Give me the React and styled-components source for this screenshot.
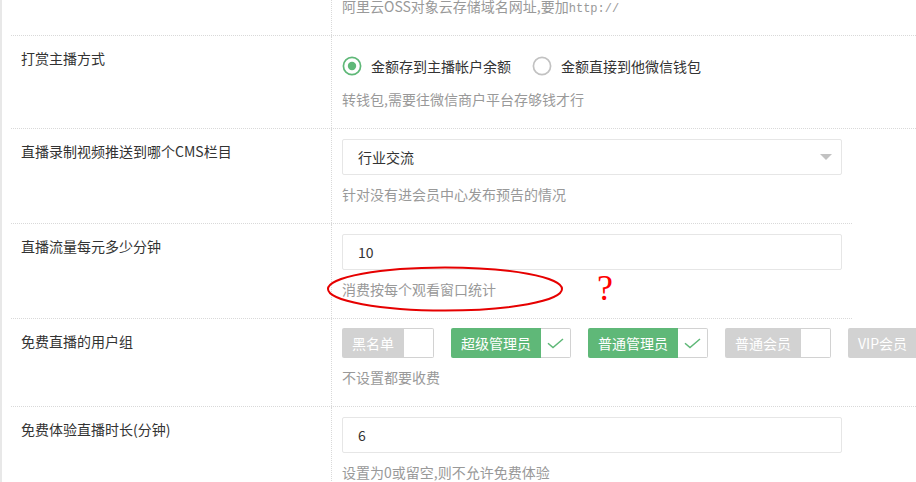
import React from 'react';
import styled, { createGlobalStyle } from 'styled-components';

const Global = createGlobalStyle`
  html, body { margin: 0; padding: 0; background: #fff; overflow: hidden; }
  body {
    font-family: "Noto Sans CJK SC", "Liberation Sans", sans-serif;
    font-size: 14px;
    color: #333;
  }
`;

const Page = styled.div`
  border-left: 2px solid #e8e8e8;
  padding-left: 9px;
  margin-top: -59px;
  min-height: 620px;
`;

const Row = styled.div`
  display: flex;
  width: ${(p) => (p.$narrow ? '841px' : '905px')};
  border-bottom: 1px dotted #d9d9d9;
`;

const LabelCell = styled.div`
  flex: 0 0 321px;
  box-sizing: border-box;
  border-right: 1px dotted #d9d9d9;
  padding: 12px 10px;
  line-height: 20px;
  color: #333;
`;

const FieldCell = styled.div`
  position: relative;
  flex: 1;
  min-width: 0;
  padding: 10px 0 10px 10px;
`;

const TextInput = styled.input`
  display: block;
  width: 500px;
  height: 36px;
  box-sizing: border-box;
  border: 1px solid #e6e6e6;
  border-radius: 2px;
  padding: 0 0 0 15px;
  margin: 0;
  font-family: inherit;
  font-size: 14px;
  color: #333;
  background: #fff;
  outline: none;
`;

const SelectBox = styled.div`
  display: flex;
  align-items: center;
  justify-content: space-between;
  width: 500px;
  height: 36px;
  box-sizing: border-box;
  border: 1px solid #e6e6e6;
  border-radius: 2px;
  padding: 0 9px 0 15px;
  color: #333;
`;

const Caret = styled.span`
  width: 0;
  height: 0;
  border: 6px solid transparent;
  border-top-color: #c2c2c2;
  margin-top: 6px;
`;

const Hint = styled.div`
  padding: 9px 0;
  height: 20px;
  line-height: 20px;
  color: #999;
  white-space: nowrap;
`;

const Mono = styled.span`
  font-family: "Liberation Mono", monospace;
  font-size: 12px;
  line-height: 1;
`;

const RadioGroup = styled.div`
  display: flex;
  align-items: center;
  height: 28px;
  margin-top: 6px;
`;

const RadioItem = styled.div`
  display: flex;
  align-items: center;
  margin-right: 21px;
  color: #333;
  line-height: 28px;
`;

const RadioIcon = styled.svg`
  width: 20px;
  height: 20px;
  margin-right: 9px;
  flex: 0 0 auto;
`;

const ToggleRow = styled.div`
  display: flex;
  flex-wrap: nowrap;
  gap: 17px;
  height: 30px;
  margin-top: -1px;
`;

const Toggle = styled.div`
  display: flex;
  flex: 0 0 auto;
  height: 30px;
`;

const ToggleText = styled.span`
  background: ${(p) => (p.$on ? '#5FB878' : '#d2d2d2')};
  color: #fff;
  padding: 0 10px;
  line-height: 30px;
  border-radius: 2px 0 0 2px;
  white-space: nowrap;
`;

const ToggleBox = styled.span`
  width: 30px;
  box-sizing: border-box;
  border: 1px solid #d2d2d2;
  border-left: none;
  border-radius: 0 2px 2px 0;
  display: flex;
  align-items: center;
  justify-content: center;
  background: #fff;
`;

const Ellipse = styled.svg`
  position: absolute;
  left: -7px;
  top: 41px;
  width: 240px;
  height: 48px;
  pointer-events: none;
`;

const Question = styled.span`
  position: absolute;
  left: 265px;
  top: 46px;
  font-family: "Liberation Serif", serif;
  font-size: 36px;
  line-height: 1;
  color: #f00;
`;

function Radio({ checked, children }) {
  return (
    <RadioItem>
      <RadioIcon viewBox="0 0 20 20">
        <circle
          cx="10"
          cy="10"
          r="8.6"
          fill="none"
          stroke={checked ? '#5FB878' : '#c2c2c2'}
          strokeWidth="1.7"
        />
        {checked && <circle cx="10" cy="10" r="4.2" fill="#5FB878" />}
      </RadioIcon>
      {children}
    </RadioItem>
  );
}

function Check({ on, children }) {
  return (
    <Toggle>
      <ToggleText $on={on}>{children}</ToggleText>
      <ToggleBox>
        {on && (
          <svg width="17" height="11" viewBox="0 0 17 11">
            <path d="M1 5.2 L6 9.6 L16 1" fill="none" stroke="#5FB878" strokeWidth="1.5" />
          </svg>
        )}
      </ToggleBox>
    </Toggle>
  );
}

export default function App() {
  return (
    <>
      <Global />
      <Page>
        <Row>
          <LabelCell />
          <FieldCell>
            <TextInput readOnly defaultValue="" />
            <Hint>
              阿里云OSS对象云存储域名网址,要加<Mono>http://</Mono>
            </Hint>
          </FieldCell>
        </Row>

        <Row>
          <LabelCell>打赏主播方式</LabelCell>
          <FieldCell>
            <RadioGroup>
              <Radio checked>金额存到主播帐户余额</Radio>
              <Radio>金额直接到他微信钱包</Radio>
            </RadioGroup>
            <Hint>转钱包,需要往微信商户平台存够钱才行</Hint>
          </FieldCell>
        </Row>

        <Row $narrow>
          <LabelCell>直播录制视频推送到哪个CMS栏目</LabelCell>
          <FieldCell>
            <SelectBox>
              <span>行业交流</span>
              <Caret />
            </SelectBox>
            <Hint>针对没有进会员中心发布预告的情况</Hint>
          </FieldCell>
        </Row>

        <Row $narrow>
          <LabelCell>直播流量每元多少分钟</LabelCell>
          <FieldCell>
            <TextInput readOnly defaultValue="10" />
            <Hint>消费按每个观看窗口统计</Hint>
            <Ellipse viewBox="0 0 240 48">
              <ellipse cx="120" cy="24" rx="117" ry="21.5" fill="none" stroke="#e60000" strokeWidth="2" />
            </Ellipse>
            <Question>?</Question>
          </FieldCell>
        </Row>

        <Row>
          <LabelCell>免费直播的用户组</LabelCell>
          <FieldCell>
            <ToggleRow>
              <Check>黑名单</Check>
              <Check on>超级管理员</Check>
              <Check on>普通管理员</Check>
              <Check>普通会员</Check>
              <Check>VIP会员</Check>
            </ToggleRow>
            <Hint>不设置都要收费</Hint>
          </FieldCell>
        </Row>

        <Row>
          <LabelCell>免费体验直播时长(分钟)</LabelCell>
          <FieldCell>
            <TextInput readOnly defaultValue="6" />
            <Hint>设置为0或留空,则不允许免费体验</Hint>
          </FieldCell>
        </Row>
      </Page>
    </>
  );
}
